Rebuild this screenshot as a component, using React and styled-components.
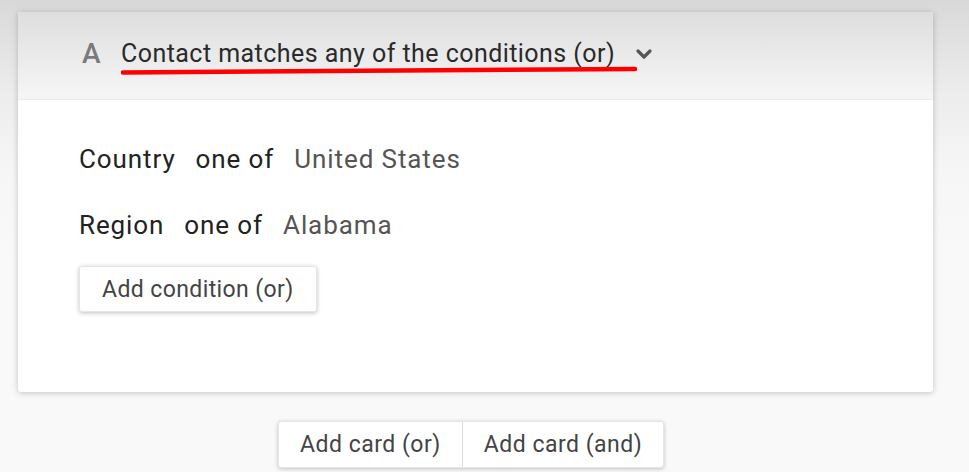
import React from 'react'
import styled, { createGlobalStyle } from 'styled-components'

const Global = createGlobalStyle`
    html, body {
        margin: 0;
        padding: 0;
    }
    body {
        width: 969px;
        height: 472px;
        overflow: hidden;
        font-family: Roboto, "Liberation Sans", sans-serif;
        background: linear-gradient(#d8d8d8 0px, #ececec 90px, #f6f6f6 170px, #f9f9f9 260px);
    }
`

function Chevron() {
    return (
        <svg width="18" height="12" viewBox="0 0 18 12">
            <path d="M3 3 L9 9 L15 3" fill="none" stroke="#555" strokeWidth="3.2" strokeLinecap="round" strokeLinejoin="round" />
        </svg>
    )
}

function Condition({ field, op, value }) {
    return (
        <Row>
            <Field>{field}</Field>
            <Op>{op}</Op>
            <Value>{value}</Value>
        </Row>
    )
}

export default function App() {
    return (
        <Page>
            <Global />
            <Card>
                <Header>
                    <Letter>A</Letter>
                    <Title>
                        Contact matches any of the conditions (or)
                        <Mark width="520" height="10" viewBox="0 0 520 10">
                            <path d="M2 6.5 L514 3" stroke="#f00" strokeWidth="4.5" strokeLinecap="round" fill="none" />
                        </Mark>
                    </Title>
                    <Chevron />
                </Header>
                <Body>
                    <Condition field="Country" op="one of" value="United States" />
                    <Condition field="Region" op="one of" value="Alabama" />
                    <Button>Add condition (or)</Button>
                </Body>
            </Card>
            <Footer>
                <Group>
                    <GroupButton>Add card (or)</GroupButton>
                    <GroupButton divider>Add card (and)</GroupButton>
                </Group>
            </Footer>
        </Page>
    )
}

const Page = styled.div`
    padding: 12px 36px 0 18px;
`
const Card = styled.div`
    background: #fff;
    border-radius: 3px;
    box-shadow: 0 1px 6px rgba(0,0,0,0.22);
    height: 380px;
    overflow: hidden;
`
const Header = styled.div`
    height: 88px;
    box-sizing: border-box;
    display: flex;
    align-items: center;
    padding: 0 0 4px 64px;
    background: linear-gradient(#dedede, #f6f6f6);
    border-bottom: 1px solid #ececec;
`
const Letter = styled.span`
    font-size: 28px;
    font-weight: 500;
    color: #7a7a7a;
    width: 39px;
`
const Title = styled.span`
    position: relative;
    font-size: 25px;
    letter-spacing: 0.45px;
    color: #2a2a2a;
    margin-right: 20px;
`
const Mark = styled.svg`
    position: absolute;
    left: 0;
    top: 27px;
`
const Body = styled.div`
    padding: 44px 0 0 61px;
    display: flex;
    flex-direction: column;
    align-items: flex-start;
`
const Row = styled.div`
    display: flex;
    gap: 20px;
    font-size: 26px;
    letter-spacing: 0.9px;
    height: 66px;
`
const Field = styled.span`
    color: #222;
`
const Op = styled.span`
    color: #222;
`
const Value = styled.span`
    color: #555;
`
const Button = styled.button`
    margin-top: -10px;
    height: 46px;
    padding: 0 22px;
    font-family: inherit;
    font-size: 23px;
    letter-spacing: 0.4px;
    color: #444;
    background: #fff;
    border: 1px solid #e6e6e6;
    border-radius: 3px;
    box-shadow: 0 1px 4px rgba(0,0,0,0.25);
`
const Footer = styled.div`
    display: flex;
    padding: 29px 0 0 260px;
`
const Group = styled.div`
    display: flex;
    background: #fff;
    border: 1px solid #e6e6e6;
    border-radius: 3px;
    box-shadow: 0 1px 4px rgba(0,0,0,0.22);
`
const GroupButton = styled.button`
    height: 45px;
    padding: 0 21px;
    font-family: inherit;
    font-size: 23px;
    letter-spacing: 0.5px;
    color: #444;
    background: none;
    border: none;
    border-left: ${props => props.divider ? '1px solid #ddd' : 'none'};
`
